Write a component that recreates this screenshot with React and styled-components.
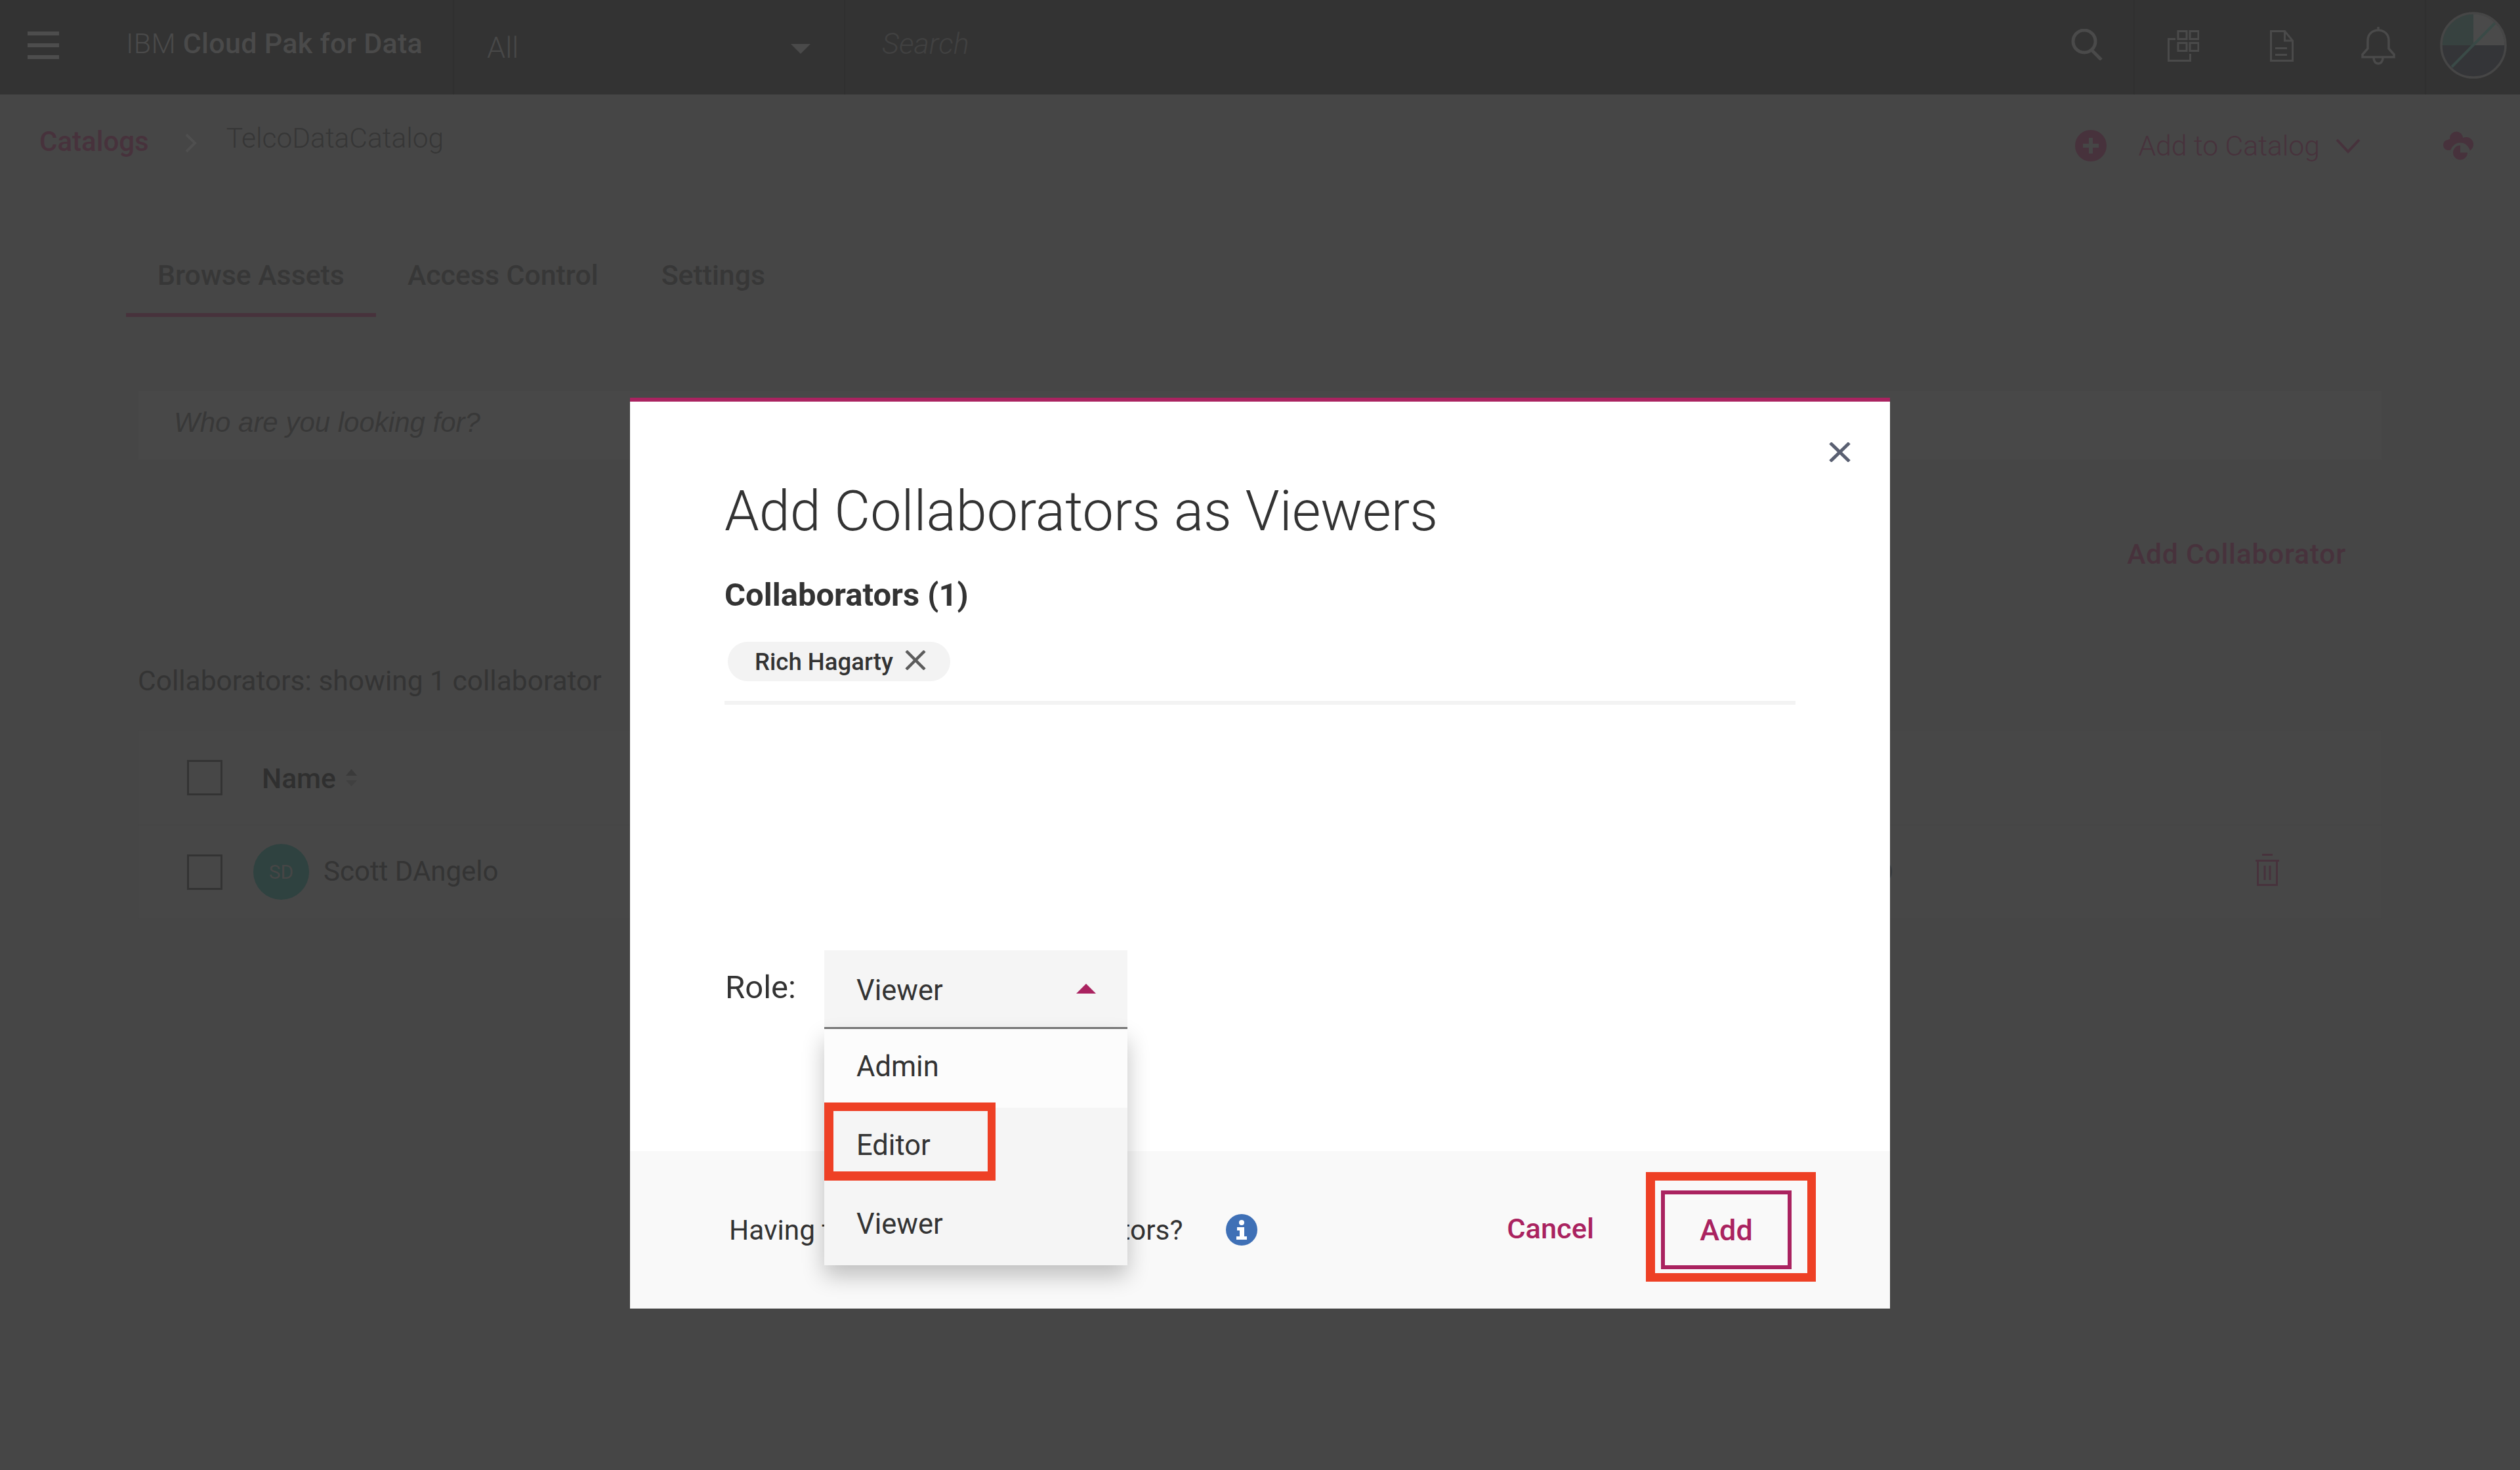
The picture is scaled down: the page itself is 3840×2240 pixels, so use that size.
import React from 'react';
import styled, { createGlobalStyle } from 'styled-components';

const GlobalStyle = createGlobalStyle`
  html, body {
    margin: 0;
    padding: 0;
    background: #464646;
  }
  * {
    box-sizing: border-box;
  }
`;

const FONT = `Roboto, "Open Sans", "Liberation Sans", sans-serif`;
const MAROON = '#47323c';
const DIM_TEXT = '#343434';
const HEADER_ICON = '#4a4a4a';
const BRAND = '#aa2360';
const ANNOTATION = '#ee4025';

const Page = styled.div`
  position: relative;
  width: 3840px;
  height: 2240px;
  overflow: hidden;
  background: #464646;
  font-family: ${FONT};
  font-size: 43px;
`;

const TopBar = styled.header`
  display: flex;
  align-items: center;
  height: 144px;
  background: #333333;
`;

const MenuButton = styled.div`
  display: flex;
  flex-direction: column;
  gap: 12px;
  width: 48px;
  margin: -6px 0 0 42px;
`;

const MenuBar = styled.span`
  display: block;
  height: 6px;
  background: #4d4d4d;
`;

const Brand = styled.div`
  width: 498px;
  margin-left: 102px;
  margin-top: -12px;
  color: #4a4a4a;
  letter-spacing: 0.3px;
  font-size: 43px;
  font-weight: 300;

  b {
    font-weight: 500;
  }
`;

const Scope = styled.div`
  display: flex;
  align-items: center;
  justify-content: space-between;
  align-self: stretch;
  width: 598px;
  padding: 0 51px 0 50px;
  border-left: 2px solid #303030;
  border-right: 2px solid #303030;
  color: #484848;
  font-weight: 300;
  font-size: 45px;
`;

const ScopeCaret = styled.span`
  width: 0;
  height: 0;
  margin-top: 4px;
  border-left: 15px solid transparent;
  border-right: 15px solid transparent;
  border-top: 15px solid #4a4a4a;
`;

const SearchText = styled.div`
  flex: 1;
  padding-left: 56px;
  margin-top: -12px;
  color: #414141;
  font-style: italic;
  font-weight: 300;
  font-size: 45px;
`;

const HeaderIcons = styled.div`
  display: flex;
  align-items: center;
  align-self: stretch;
`;

const HeaderIcon = styled.div`
  display: flex;
  align-items: center;
  justify-content: center;
  align-self: stretch;
  width: ${(p) => p.$width}px;
  margin-top: -${(p) => p.$lift || 0}px;
`;

const IconDivider = styled.span`
  align-self: stretch;
  width: 2px;
  background: #303030;
`;

const SubBar = styled.div`
  display: flex;
  justify-content: space-between;
  height: 210px;
  padding: 42px 70px 0 60px;
`;

const Breadcrumb = styled.nav`
  display: flex;
  align-items: flex-start;
  line-height: 60px;
`;

const CrumbLink = styled.span`
  color: ${MAROON};
  font-weight: 500;
  font-size: 42px;
`;

const CrumbChevron = styled.svg`
  margin: 18px 44px 0 54px;
`;

const CrumbCurrent = styled.span`
  margin-top: -5px;
  color: #363636;
  font-weight: 300;
  font-size: 42.500px;
`;

const CatalogActions = styled.div`
  display: flex;
  align-items: center;
  align-self: flex-start;
  height: 72px;
`;

const AddToCatalog = styled.span`
  margin: 0 24px 0 48px;
  color: ${MAROON};
  font-size: 42.700px;
  font-weight: 300;
`;

const CloudIcon = styled.svg`
  margin-left: 126px;
`;

const Tabs = styled.div`
  display: flex;
  margin-left: 192px;
`;

const Tab = styled.div`
  display: flex;
  align-items: flex-start;
  height: 129px;
  padding: 35px 48px 0;
  color: #373737;
  font-weight: 500;
  font-size: 42.800px;
  line-height: 60px;
  border-bottom: 6px solid ${(p) => (p.$active ? MAROON : 'transparent')};
`;

const FilterInput = styled.div`
  display: flex;
  align-items: center;
  width: 3418px;
  height: 104px;
  margin: 113px 0 0 211px;
  padding: 0 0 8px 54px;
  background: #484848;
  color: #383838;
  font-family: "Liberation Sans", sans-serif;
  font-style: italic;
  font-size: 42px;
`;

const ActionRow = styled.div`
  display: flex;
  justify-content: flex-end;
  margin: 115px 265px 0 0;
  line-height: 60px;
`;

const AddCollaborator = styled.span`
  color: ${MAROON};
  font-weight: 500;
  font-size: 42.500px;
  letter-spacing: 0.800px;
`;

const TableCaption = styled.div`
  margin: 133px 0 0 210px;
  color: ${DIM_TEXT};
  font-size: 42.500px;
  line-height: 60px;
`;

const Table = styled.div`
  width: 3418px;
  margin: 45px 0 0 211px;
`;

const TableRow = styled.div`
  display: flex;
  align-items: center;
  height: ${(p) => p.$height}px;
  padding: 0 155px 0 73px;
  background: #474747;
  border: 1px solid #454545;
`;

const Checkbox = styled.span`
  width: 54px;
  height: 54px;
  border: 3px solid #333333;
`;

const NameHeader = styled.span`
  margin-left: 60px;
  margin-top: 2px;
  color: #2f2f2f;
  font-weight: 500;
  font-size: 42.500px;
`;

const SortIcon = styled.svg`
  margin-left: 15px;
`;

const Avatar = styled.span`
  display: flex;
  align-items: center;
  justify-content: center;
  width: 85px;
  height: 85px;
  margin-left: 47px;
  border-radius: 50%;
  background: #2f4240;
  color: #464646;
  font-size: 30px;
`;

const PersonName = styled.span`
  margin: -3px 0 0 22px;
  color: ${DIM_TEXT};
  font-size: 42px;
`;

const RoleCell = styled.span`
  margin-left: auto;
  margin-right: 552px;
  color: ${DIM_TEXT};
  font-size: 42px;
`;

const TrashIcon = styled.svg`
  margin-top: -6px;
`;

const Modal = styled.section`
  position: absolute;
  top: 606px;
  left: 960px;
  display: flex;
  flex-direction: column;
  width: 1920px;
  height: 1388px;
  background: #ffffff;
  border-top: 6px solid ${BRAND};
  color: #333333;
`;

const CloseIcon = styled.svg`
  position: absolute;
  top: 62px;
  right: 60px;
`;

const ModalBody = styled.div`
  flex: 1;
  padding: 108px 144px 0;
`;

const Title = styled.h2`
  margin: 0;
  font-weight: 300;
  font-size: 84.500px;
  line-height: 120px;
`;

const FieldLabel = styled.div`
  margin-top: 37px;
  font-weight: 700;
  font-size: 49px;
  line-height: 60px;
`;

const Chip = styled.div`
  display: inline-flex;
  align-items: center;
  height: 60px;
  margin: 41px 0 0 5px;
  padding: 0 37px 0 41px;
  border-radius: 30px;
  background: #f3f3f3;
  font-size: 36.600px;
  font-weight: 500;
`;

const ChipClose = styled.svg`
  margin: -4px 0 0 18px;
`;

const FieldLine = styled.div`
  height: 6px;
  margin-top: 30px;
  width: 1632px;
  background: #f3f3f3;
`;

const RoleRow = styled.div`
  display: flex;
  margin-top: 374px;
`;

const RoleLabel = styled.span`
  width: 152px;
  padding: 27px 0 0 1px;
  font-size: 49px;
  line-height: 60px;
`;

const Select = styled.div`
  position: relative;
  display: flex;
  align-items: center;
  justify-content: space-between;
  width: 462px;
  height: 120px;
  padding: 0 48px 0 49px;
  background: #f5f5f5;
  border-bottom: 3px solid #777777;
  font-size: 43.500px;
`;

const SelectValue = styled.span`
  padding-top: 5px;
`;

const SelectCaret = styled.span`
  width: 0;
  height: 0;
  border-left: 15px solid transparent;
  border-right: 15px solid transparent;
  border-bottom: 15px solid ${BRAND};
`;

const Menu = styled.div`
  position: absolute;
  top: 120px;
  left: 0;
  width: 462px;
  box-shadow: 0 16px 32px rgba(0, 0, 0, 0.24);
  z-index: 2;
`;

const MenuItem = styled.div`
  position: relative;
  display: flex;
  align-items: center;
  height: 120px;
  padding: 0 0 6px 49px;
  background: ${(p) => (p.$light ? '#fcfcfc' : '#f5f5f5')};
`;

const EditorMark = styled.span`
  position: absolute;
  top: -8px;
  left: 0;
  width: 261px;
  height: 119px;
  border: solid ${ANNOTATION};
  border-width: 13px 12px 14px 14px;
`;

const Footer = styled.footer`
  display: flex;
  align-items: center;
  height: 240px;
  padding: 0 113px 0 151px;
  background: #f9f9f9;
`;

const HelpText = styled.span`
  font-size: 42.400px;
  white-space: nowrap;
`;

const InfoIcon = styled.svg`
  margin-left: 66px;
`;

const CancelButton = styled.span`
  margin: -4px 79px 0 auto;
  color: ${BRAND};
  font-weight: 500;
  font-size: 43.400px;
`;

const AddMark = styled.div`
  margin-top: -9px;
  padding: 15px 24px 6px 9px;
  border: solid ${ANNOTATION};
  border-width: 13px 13px 13px 14px;
`;

const AddButton = styled.div`
  display: flex;
  align-items: center;
  justify-content: center;
  width: 199px;
  height: 120px;
  border: 6px solid ${BRAND};
  color: ${BRAND};
  font-weight: 500;
  font-size: 45px;
`;

const App = () => (
  <Page>
    <GlobalStyle />
    <TopBar>
      <MenuButton>
        <MenuBar />
        <MenuBar />
        <MenuBar />
      </MenuButton>
      <Brand>
        IBM <b>Cloud Pak for Data</b>
      </Brand>
      <Scope>
        All
        <ScopeCaret />
      </Scope>
      <SearchText>Search</SearchText>
      <HeaderIcons>
        <HeaderIcon $width={142} $lift={8}>
          <svg width="48" height="48" viewBox="0 0 48 48" fill="none" stroke={HEADER_ICON} strokeWidth="5">
            <circle cx="20" cy="19" r="17" />
            <path d="M31 32l15 15" />
          </svg>
        </HeaderIcon>
        <IconDivider />
        <HeaderIcon $width={148} $lift={4}>
          <svg width="48" height="48" viewBox="0 0 48 48" fill="none" stroke={HEADER_ICON} strokeWidth="3">
            <rect x="16" y="1.500" width="13" height="12" />
            <rect x="34" y="1.500" width="13" height="12" />
            <rect x="16" y="19.500" width="13" height="12" />
            <rect x="34" y="19.500" width="13" height="12" />
            <path d="M12 13.500H1.500v33h33V36" />
          </svg>
        </HeaderIcon>
        <HeaderIcon $width={152} $lift={4}>
          <svg width="36" height="48" viewBox="0 0 36 48" fill="none" stroke={HEADER_ICON} strokeWidth="3">
            <path d="M1.500 1.500h21L34.500 16v30.500h-33z" />
            <path d="M22.500 1.500V16h12M8 27.500h18M8 37.500h18" />
          </svg>
        </HeaderIcon>
        <HeaderIcon $width={142} $lift={4}>
          <svg width="52" height="58" viewBox="0 0 52 58" fill="none" stroke={HEADER_ICON} strokeWidth="3.500">
            <path d="M26 0v6M10 33V21C10 11 17 5 26 5s16 6 16 16v12l8 9v4H2v-4z" />
            <path d="M19 47c0 12 14 12 14 0" />
          </svg>
        </HeaderIcon>
        <IconDivider />
        <HeaderIcon $width={143} $lift={6}>
          <svg width="102" height="102" viewBox="0 0 102 102" fill="none">
            <path d="M51 51V3A48 48 0 0 0 3 51z" fill="#374240" />
            <path d="M51 51V3A48 48 0 0 1 99 51z" fill="#4a4a4a" />
            <path d="M3 51a48 48 0 0 0 96 0z" fill="#343538" />
            <path d="M84 17L18 84" stroke="#3a4a47" strokeWidth="4" />
            <circle cx="51" cy="51" r="49" stroke="#464646" strokeWidth="3.500" />
          </svg>
        </HeaderIcon>
      </HeaderIcons>
    </TopBar>

    <SubBar>
      <Breadcrumb>
        <CrumbLink>Catalogs</CrumbLink>
        <CrumbChevron width="20" height="28" viewBox="0 0 20 28" fill="none" stroke="#4f4f4f" strokeWidth="4">
          <path d="M3 1l13 13L3 27" />
        </CrumbChevron>
        <CrumbCurrent>TelcoDataCatalog</CrumbCurrent>
      </Breadcrumb>
      <CatalogActions>
        <svg width="48" height="48" viewBox="0 0 48 48">
          <circle cx="24" cy="24" r="24" fill={MAROON} />
          <path d="M21 12h6v9h9v6h-9v9h-6v-9h-9v-6h9z" fill="#464646" />
        </svg>
        <AddToCatalog>Add to Catalog</AddToCatalog>
        <svg width="38" height="24" viewBox="0 0 38 24" fill="none" stroke={MAROON} strokeWidth="4">
          <path d="M2 3l17 18L36 3" />
        </svg>
        <CloudIcon width="47" height="44" viewBox="0 0 47 44">
          <circle cx="20" cy="10.500" r="10" fill={MAROON} />
          <circle cx="8" cy="21" r="8" fill={MAROON} />
          <circle cx="35" cy="20" r="11" fill={MAROON} />
          <rect x="8" y="12" width="27" height="16" fill={MAROON} />
          <circle cx="26" cy="32.500" r="15" fill="#464646" />
          <path d="M26 32.500V21.500A11 11 0 1 0 37 32.500z" fill={MAROON} />
        </CloudIcon>
      </CatalogActions>
    </SubBar>

    <Tabs>
      <Tab $active>Browse Assets</Tab>
      <Tab>Access Control</Tab>
      <Tab>Settings</Tab>
    </Tabs>

    <FilterInput>Who are you looking for?</FilterInput>

    <ActionRow>
      <AddCollaborator>Add Collaborator</AddCollaborator>
    </ActionRow>

    <TableCaption>Collaborators: showing 1 collaborator</TableCaption>

    <Table>
      <TableRow $height={144}>
        <Checkbox />
        <NameHeader>Name</NameHeader>
        <SortIcon width="17" height="26" viewBox="0 0 17 26">
          <path d="M8.500 0L17 10H0z" fill="#3a3a3a" />
          <path d="M8.500 26L0 17h17z" fill="#404040" />
        </SortIcon>
      </TableRow>
      <TableRow $height={143}>
        <Checkbox />
        <Avatar>SD</Avatar>
        <PersonName>Scott DAngelo</PersonName>
        <RoleCell>D</RoleCell>
        <TrashIcon width="36" height="49" viewBox="0 0 36 49" fill="none" stroke={MAROON} strokeWidth="3">
          <path d="M10 1.500h16M0 10.500h36M3.500 10.500v37h29v-37M14 18v22M22 18v22" />
        </TrashIcon>
      </TableRow>
    </Table>

    <Modal>
      <CloseIcon width="33" height="30" viewBox="0 0 33 30" fill="none" stroke="#5a6072" strokeWidth="5">
        <path d="M2 1l29 28M31 1L2 29" />
      </CloseIcon>
      <ModalBody>
        <Title>Add Collaborators as Viewers</Title>
        <FieldLabel>Collaborators (1)</FieldLabel>
        <Chip>
          Rich Hagarty
          <ChipClose width="32" height="30" viewBox="0 0 32 30" fill="none" stroke="#5c5c5c" strokeWidth="4.500">
            <path d="M2 1l28 28M30 1L2 29" />
          </ChipClose>
        </Chip>
        <FieldLine />
        <RoleRow>
          <RoleLabel>Role:</RoleLabel>
          <Select>
            <SelectValue>Viewer</SelectValue>
            <SelectCaret />
            <Menu>
              <MenuItem $light>Admin</MenuItem>
              <MenuItem>
                Editor
                <EditorMark />
              </MenuItem>
              <MenuItem>Viewer</MenuItem>
            </Menu>
          </Select>
        </RoleRow>
      </ModalBody>
      <Footer>
        <HelpText>Having trouble adding collaborators?</HelpText>
        <InfoIcon width="48" height="48" viewBox="0 0 48 48">
          <circle cx="24" cy="24" r="24" fill="#3f70b6" />
          <circle cx="24" cy="13" r="4" fill="#ffffff" />
          <path d="M17 20h11v14h4v5H16v-5h5v-9h-4z" fill="#ffffff" />
        </InfoIcon>
        <CancelButton>Cancel</CancelButton>
        <AddMark>
          <AddButton>Add</AddButton>
        </AddMark>
      </Footer>
    </Modal>
  </Page>
);

export default App;
